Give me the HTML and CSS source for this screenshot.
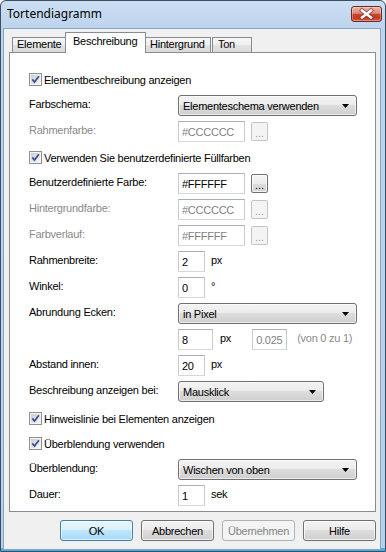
FILE: index.html
```html
<!DOCTYPE html>
<html lang="de">
<head>
<meta charset="utf-8">
<title>Tortendiagramm</title>
<link rel="stylesheet" href="styles.css">
</head>
<body>
<svg class="defs" width="0" height="0" aria-hidden="true">
  <defs>
    <linearGradient id="cbg" x1="0" y1="0" x2="1" y2="1">
      <stop offset="0" stop-color="#c9ccd2"/>
      <stop offset="1" stop-color="#f7f7f7"/>
    </linearGradient>
    <symbol id="check" viewBox="0 0 13 13">
      <rect x="0.5" y="0.5" width="12" height="12" fill="#f4f4f4" stroke="#8f8f8f"/>
      <rect x="2" y="2" width="9" height="9" fill="url(#cbg)"/>
      <path d="M3.3 6.4 L5.5 9.1 L9.9 3.3" fill="none" stroke="#3a4e94" stroke-width="1.7"/>
    </symbol>
    <symbol id="arrow" viewBox="0 0 7 4">
      <path d="M0 0H7L3.5 4Z" fill="#000"/>
    </symbol>
  </defs>
</svg>
<div class="window">
  <div class="titlebar">
    <span class="title">Tortendiagramm</span>
    <div class="close">
      <svg width="29" height="14" viewBox="0 0 29 14">
        <path d="M10 3.5 L19 10.5 M19 3.5 L10 10.5" stroke="#7a3a32" stroke-width="4.2" stroke-linecap="square" fill="none" opacity="0.75"/>
        <path d="M10 3.5 L19 10.5 M19 3.5 L10 10.5" stroke="#ffffff" stroke-width="2.4" stroke-linecap="square" fill="none"/>
      </svg>
    </div>
  </div>
  <div class="client">
    <div class="tabs">
      <div class="tab tab-elemente">Elemente</div>
      <div class="tab tab-active">Beschreibung</div>
      <div class="tab tab-hinter">Hintergrund</div>
      <div class="tab tab-ton">Ton</div>
    </div>
    <div class="panel">
      <div class="row">
        <div class="chk"><svg class="cb"><use href="#check"/></svg><span>Elementbeschreibung anzeigen</span></div>
      </div>
      <div class="row">
        <span class="lbl">Farbschema:</span>
        <div class="combo combo-wide"><span>Elementeschema verwenden</span><svg class="arr"><use href="#arrow"/></svg></div>
      </div>
      <div class="row">
        <span class="lbl dis">Rahmenfarbe:</span>
        <div class="field field-color dis">#CCCCCC</div>
        <div class="dots dots-dis">...</div>
      </div>
      <div class="row">
        <div class="chk"><svg class="cb"><use href="#check"/></svg><span>Verwenden Sie benutzerdefinierte Füllfarben</span></div>
      </div>
      <div class="row">
        <span class="lbl">Benutzerdefinierte Farbe:</span>
        <div class="field field-color">#FFFFFF</div>
        <div class="dots">...</div>
      </div>
      <div class="row">
        <span class="lbl dis">Hintergrundfarbe:</span>
        <div class="field field-color dis">#CCCCCC</div>
        <div class="dots dots-dis">...</div>
      </div>
      <div class="row">
        <span class="lbl dis">Farbverlauf:</span>
        <div class="field field-color dis">#FFFFFF</div>
        <div class="dots dots-dis">...</div>
      </div>
      <div class="row">
        <span class="lbl">Rahmenbreite:</span>
        <div class="field field-small">2</div>
        <span class="unit">px</span>
      </div>
      <div class="row">
        <span class="lbl">Winkel:</span>
        <div class="field field-small">0</div>
        <span class="unit">°</span>
      </div>
      <div class="row">
        <span class="lbl">Abrundung Ecken:</span>
        <div class="combo combo-wide"><span>in Pixel</span><svg class="arr"><use href="#arrow"/></svg></div>
      </div>
      <div class="row">
        <span class="lbl"></span>
        <div class="field field-mid">8</div>
        <span class="unit unit-px">px</span>
        <div class="field field-mid dis">0.025</div>
        <span class="unit unit-note dis">(von 0 zu 1)</span>
      </div>
      <div class="row">
        <span class="lbl">Abstand innen:</span>
        <div class="field field-small">20</div>
        <span class="unit">px</span>
      </div>
      <div class="row">
        <span class="lbl">Beschreibung anzeigen bei:</span>
        <div class="combo combo-mid"><span>Mausklick</span><svg class="arr"><use href="#arrow"/></svg></div>
      </div>
      <div class="row row-cb3">
        <div class="chk"><svg class="cb"><use href="#check"/></svg><span>Hinweislinie bei Elementen anzeigen</span></div>
      </div>
      <div class="row row-cb4">
        <div class="chk"><svg class="cb"><use href="#check"/></svg><span>Überblendung verwenden</span></div>
      </div>
      <div class="row">
        <span class="lbl">Überblendung:</span>
        <div class="combo combo-wide"><span>Wischen von oben</span><svg class="arr"><use href="#arrow"/></svg></div>
      </div>
      <div class="row">
        <span class="lbl">Dauer:</span>
        <div class="field field-small">1</div>
        <span class="unit">sek</span>
      </div>
    </div>
    <div class="buttons">
      <div class="btn btn-default">OK</div>
      <div class="btn">Abbrechen</div>
      <div class="btn btn-dis">Übernehmen</div>
      <div class="btn">Hilfe</div>
    </div>
  </div>
</div>
</body>
</html>
```
FILE: styles.css
```css
* { box-sizing: border-box; }
html, body { margin: 0; padding: 0; }
body {
  width: 386px;
  height: 552px;
  overflow: hidden;
  background: #ffffff;
  font-family: "Liberation Sans", Arial, sans-serif;
  font-size: 11px;
  letter-spacing: -0.25px;
  color: #000;
}
.defs { position: absolute; width: 0; height: 0; overflow: hidden; }

.window {
  width: 386px;
  height: 552px;
  border: 1px solid #3d4e63;
  border-radius: 6px 6px 0 0;
  background: linear-gradient(#cbdef2 0px, #bdd4ed 28px, #b6cfea calc(100% - 3px), #3ab4e6 calc(100% - 3px), #3ab4e6 100%);
  display: flex;
  flex-direction: column;
}

.titlebar {
  height: 28px;
  display: flex;
  align-items: flex-start;
  flex: none;
}
.title {
  font-family: "Noto Sans", "Open Sans", sans-serif;
  font-size: 12px;
  letter-spacing: 0;
  line-height: 16px;
  margin-top: 5px;
  padding-left: 6px;
  color: #000;
}
.close {
  margin-left: auto;
  margin-right: 3px;
  margin-top: 5px;
  width: 31px;
  height: 16px;
  border: 1px solid #6b2b24;
  border-radius: 3px;
  background: linear-gradient(#ecb4a6 0%, #dc8a79 45%, #c9452c 52%, #c53a20 80%, #d9684e 100%);
  box-shadow: inset 0 0 0 1px rgba(255, 255, 255, 0.3);
  display: flex;
}

.client {
  flex: 1;
  margin: 0 5px 2px 3px;
  background: #f0f0f0;
  box-shadow: 0 0 0 1px #86a6c8;
  padding: 0 4px 8px 5px;
  display: flex;
  flex-direction: column;
}

.tabs {
  height: 20px;
  margin-top: 3px;
  padding-left: 3px;
  display: flex;
  align-items: flex-end;
  position: relative;
  z-index: 1;
  flex: none;
}
.tab {
  height: 15px;
  border: 1px solid #898c95;
  border-bottom: none;
  background: linear-gradient(#f7f7f7, #efefef 50%, #e3e3e3 50%, #dadada);
  line-height: 13px;
  padding-left: 4px;
  white-space: nowrap;
}
.tab-elemente { width: 54px; }
.tab-active {
  width: 81px;
  height: 21px;
  margin-left: -1px;
  margin-bottom: -1px;
  background: #ffffff;
  padding-top: 2px;
  padding-left: 7px;
}
.tab-hinter { width: 66px; margin-left: -1px; }
.tab-ton { width: 40px; margin-left: 1px; padding-left: 5px; }

.panel {
  height: 460px;
  flex: none;
  background: #ffffff;
  border: 1px solid #898c95;
  padding: 16px 0 0 19px;
  display: flex;
  flex-direction: column;
  gap: 5px;
}
.row {
  height: 21px;
  display: flex;
  align-items: center;
  flex: none;
}
.row-cb3 { margin-top: 1px; }
.row-cb4 { margin-top: -1px; }

.chk {
  display: flex;
  align-items: center;
  gap: 2px;
  white-space: nowrap;
}
.cb { width: 13px; height: 13px; flex: none; }

.lbl {
  width: 149px;
  flex: none;
  padding-bottom: 4px;
  white-space: nowrap;
}
.unit {
  padding-bottom: 4px;
  margin-left: 6px;
  white-space: nowrap;
}
.unit-px { margin-left: 7px; margin-right: 21px; }
.unit-note { margin-left: 10px; }
.dis { color: #8a8a8a; }

.field {
  height: 21px;
  background: #ffffff;
  border: 1px solid #d4d8de;
  border-top-color: #abadb3;
  border-left-color: #c9ccd3;
  border-right-color: #c9ccd3;
  padding-left: 3px;
  display: flex;
  align-items: center;
  white-space: nowrap;
  flex: none;
}
.field.dis { color: #7f7f7f; }
.field-color { width: 67px; }
.field-small { width: 27px; }
.field-mid { width: 35px; }

.dots {
  width: 17px;
  height: 19px;
  margin-left: 6px;
  border: 1px solid #707070;
  border-radius: 2px;
  background: linear-gradient(#f4f4f4, #ececec 50%, #dedede 50%, #d2d2d2);
  box-shadow: inset 0 0 0 1px rgba(255, 255, 255, 0.7);
  display: flex;
  align-items: center;
  justify-content: center;
  padding-top: 2px;
  letter-spacing: 0;
  flex: none;
}
.dots-dis {
  border-color: #c2c4c7;
  background: #f4f4f4;
  color: #9a9a9a;
  box-shadow: none;
}

.combo {
  height: 21px;
  border: 1px solid #707070;
  border-radius: 3px;
  background: linear-gradient(#f3f3f3, #ebebeb 50%, #dddddd 50%, #cfcfcf);
  box-shadow: inset 0 0 0 1px rgba(255, 255, 255, 0.6);
  display: flex;
  align-items: center;
  padding-left: 4px;
  padding-right: 7px;
  white-space: nowrap;
  flex: none;
}
.combo span { flex: 1; }
.combo-wide { width: 179px; }
.combo-mid { width: 146px; }
.arr { width: 7px; height: 4px; flex: none; }

.buttons {
  margin-top: 8px;
  display: flex;
  justify-content: flex-end;
  gap: 8px;
  flex: none;
}
.btn {
  width: 73px;
  height: 21px;
  border: 1px solid #707070;
  border-radius: 3px;
  background: linear-gradient(#f3f3f3, #ebebeb 50%, #dddddd 50%, #cfcfcf);
  box-shadow: inset 0 0 0 1px rgba(255, 255, 255, 0.7);
  display: flex;
  align-items: center;
  justify-content: center;
  white-space: nowrap;
}
.btn-default {
  border-color: #3c7fb1;
  background: linear-gradient(#eaf6fd, #d9f0fc 50%, #bee6fd 50%, #a7d9f5);
  box-shadow: inset 0 0 0 1px rgba(255, 255, 255, 0.6);
}
.btn-dis {
  border-color: #adb2b5;
  background: #f4f4f4;
  color: #838383;
  box-shadow: none;
}
```
